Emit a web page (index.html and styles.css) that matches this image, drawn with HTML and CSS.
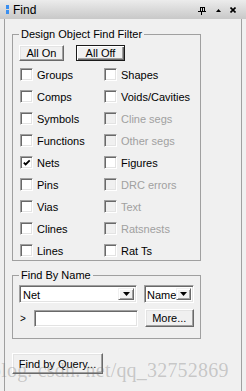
FILE: index.html
```html
<!DOCTYPE html>
<html>
<head>
<meta charset="utf-8">
<link rel="stylesheet" href="styles.css">
</head>
<body>
<div class="win">
  <div class="titlebar">
    <span class="grip"><i></i><i></i></span>
    <span class="title">Find</span>
    <span class="tools">
      <svg class="pin" width="8" height="8" viewBox="0 0 8 8"><rect x="2" y="0" width="4" height="4" fill="none" stroke="#000" stroke-width="1" transform="translate(0.5 0.5)" /><rect x="4" y="0" width="1" height="4" fill="#000"/><rect x="0" y="4" width="8" height="1" fill="#000"/><rect x="3" y="5" width="1" height="3" fill="#000"/></svg>
      <svg class="up" width="5" height="3" viewBox="0 0 5 3"><path d="M0 3 L2.5 0 L5 3 Z" fill="#000"/></svg>
      <svg class="close" width="6" height="6" viewBox="0 0 6 6"><path d="M0.5 0.5 L5.5 5.5 M5.5 0.5 L0.5 5.5" stroke="#000" stroke-width="1.6"/></svg>
    </span>
  </div>
  <div class="pane">
    <fieldset class="group filter">
      <legend>Design Object Find Filter</legend>
      <div class="btnrow">
        <button class="btn allon">All On</button>
        <button class="btn def alloff">All Off</button>
      </div>
      <div class="checks">
        <label class="chk"><span class="box"></span>Groups</label>
        <label class="chk"><span class="box"></span>Shapes</label>
        <label class="chk"><span class="box"></span>Comps</label>
        <label class="chk"><span class="box"></span>Voids/Cavities</label>
        <label class="chk"><span class="box"></span>Symbols</label>
        <label class="chk dis"><span class="box"></span>Cline segs</label>
        <label class="chk"><span class="box"></span>Functions</label>
        <label class="chk dis"><span class="box"></span>Other segs</label>
        <label class="chk"><span class="box"><svg width="11" height="11" viewBox="0 0 11 11"><path d="M2 4.5 L4 6.5 L8.5 2" fill="none" stroke="#000" stroke-width="2"/></svg></span>Nets</label>
        <label class="chk"><span class="box"></span>Figures</label>
        <label class="chk"><span class="box"></span>Pins</label>
        <label class="chk dis"><span class="box"></span>DRC errors</label>
        <label class="chk"><span class="box"></span>Vias</label>
        <label class="chk dis"><span class="box"></span>Text</label>
        <label class="chk"><span class="box"></span>Clines</label>
        <label class="chk dis"><span class="box"></span>Ratsnests</label>
        <label class="chk"><span class="box"></span>Lines</label>
        <label class="chk"><span class="box"></span>Rat Ts</label>
      </div>
    </fieldset>
    <fieldset class="group byname">
      <legend>Find By Name</legend>
      <div class="row">
        <div class="combo net"><span class="val">Net</span><span class="drop"><svg width="7" height="4" viewBox="0 0 7 4"><path d="M0 0 L7 0 L3.5 4 Z" fill="#000"/></svg></span></div>
        <div class="combo kind"><span class="val">Name</span><span class="drop"><svg width="7" height="4" viewBox="0 0 7 4"><path d="M0 0 L7 0 L3.5 4 Z" fill="#000"/></svg></span></div>
      </div>
      <div class="row row2">
        <span class="prompt">&gt;</span>
        <span class="input"></span>
        <button class="btn more">More...</button>
      </div>
    </fieldset>
    <button class="btn query">Find by Query...</button>
  </div>
  <div class="watermark">blog. csdn. net/qq_32752869</div>
</div>
</body>
</html>
```
FILE: styles.css
```css
* { box-sizing: border-box; }
html, body { margin: 0; padding: 0; }
body {
  background: #f0f0f0;
  font: 11px "Liberation Sans", Arial, sans-serif;
  color: #000;
}
.win {
  position: relative;
  width: 246px;
  height: 391px;
  overflow: hidden;
  background: #f0f0f0;
  display: flex;
  flex-direction: column;
}
.titlebar {
  height: 19px;
  flex: none;
  display: flex;
  align-items: center;
  padding-left: 6px;
  padding-right: 10px;
  background: linear-gradient(#ececec, #c8c8c8);
}
.grip {
  display: flex;
  flex-direction: column;
  gap: 1px;
  margin-top: -1px;
}
.grip i {
  display: block;
  width: 3px;
  height: 4px;
  background: #3a8ff0;
}
.title {
  margin-left: 4px;
  font-size: 12px;
  line-height: 14px;
}
.tools {
  margin-left: auto;
  display: flex;
  align-items: center;
}
.tools svg { display: block; }
.pin { margin-top: 3px; }
.up { margin-left: 10px; margin-top: 2px; }
.close { margin-left: 9px; margin-top: 0px; }

.pane {
  flex: 1;
  margin: 0 4px;
  border-left: 1px solid #a0a0a0;
  border-right: 1px solid #a0a0a0;
  padding-left: 7px;
  display: flex;
  flex-direction: column;
  align-items: flex-start;
}
.group {
  width: 189px;
  margin: 0;
  min-width: 0;
  border: 1px solid #a0a0a0;
  padding: 4px 6px 3px 6px;
}
.group legend {
  padding: 0 2px;
  line-height: 13px;
}
.filter { margin-top: 9px; }
.byname { margin-top: 8px; padding-top: 3px; padding-bottom: 11px; }

.btn {
  font: inherit;
  color: #000;
  background: #f0f0f0;
  border: 1px solid;
  border-color: #fff #696969 #696969 #fff;
  box-shadow: inset -1px -1px 0 #a0a0a0, inset 1px 1px 0 #e3e3e3;
  padding: 0;
  margin: 0;
  line-height: 12px;
}
.btn.def {
  border: 1px solid #1a1a1a;
  box-shadow: inset 1px 1px 0 #fff, inset -1px -1px 0 #696969, inset -2px -2px 0 #a0a0a0;
}
.btnrow { display: flex; gap: 12px; }
.allon { width: 45px; height: 16px; }
.alloff { width: 49px; height: 16px; }

.checks {
  display: grid;
  grid-template-columns: 84px 1fr;
  row-gap: 9px;
  margin: 7px 0 0 1px;
}
.chk {
  display: flex;
  align-items: center;
  gap: 4px;
  height: 13px;
  white-space: nowrap;
}
.box, .input {
  background: #fff;
  border: 1px solid;
  border-color: #a0a0a0 #fff #fff #a0a0a0;
  box-shadow: inset 1px 1px 0 #696969, inset -1px -1px 0 #e3e3e3;
}
.box {
  flex: none;
  width: 13px;
  height: 13px;
  display: flex;
  align-items: center;
  justify-content: center;
}
.box svg { display: block; margin: 1px 0 0 1px; }
.chk.dis { color: #a0a0a0; }
.chk.dis .box { background: #f0f0f0; }

.row { display: flex; align-items: center; }
.row2 { margin-top: 6px; }
.combo {
  height: 18px;
  display: flex;
  background: #fff;
  border: 1px solid;
  border-color: #a0a0a0 #fff #fff #a0a0a0;
  box-shadow: inset 1px 1px 0 #696969, inset -1px -1px 0 #e3e3e3;
  padding: 2px;
}
.combo .val { flex: 1; line-height: 14px; padding-left: 1px; }
.combo .drop {
  width: 16px;
  background: #f0f0f0;
  border: 1px solid;
  border-color: #f0f0f0 #696969 #696969 #f0f0f0;
  box-shadow: inset 1px 1px 0 #fff, inset -1px -1px 0 #a0a0a0;
  display: flex;
  align-items: center;
  justify-content: center;
}
.combo.net { width: 120px; }
.combo.kind { width: 50px; margin-left: 7px; }
.combo.kind .val { padding-left: 0; }
.prompt { width: 15px; padding-left: 1px; font-size: 10px; }
.input { width: 105px; height: 17px; }
.more { width: 50px; height: 18px; margin-left: 7px; }
.query { width: 91px; height: 21px; margin-top: 14px; }

.watermark {
  position: absolute;
  left: -9px;
  top: 358px;
  font: 20px/24px "Liberation Serif", "Times New Roman", serif;
  letter-spacing: 0.2px;
  color: rgba(110, 110, 110, 0.33);
  white-space: nowrap;
  pointer-events: none;
}
```
